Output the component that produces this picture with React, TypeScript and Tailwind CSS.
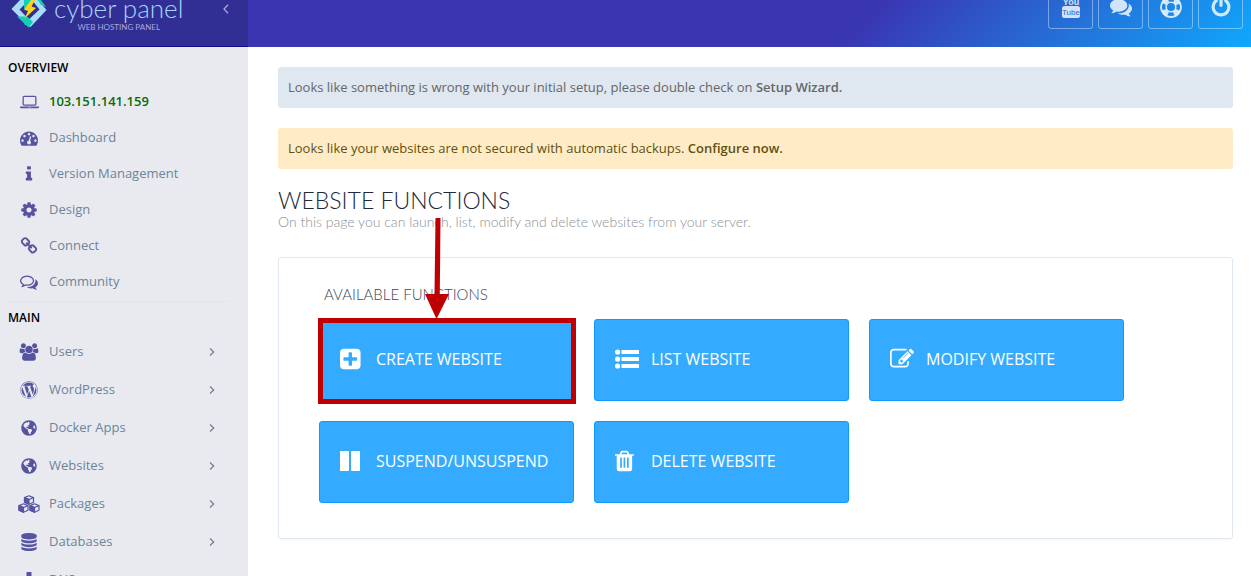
import type { ReactNode } from "react";
import { FaGlobeAmericas, FaWordpress } from "react-icons/fa";

const P = {
  laptop:
    "M416 1280q-66 0-113-47t-47-113v-704q0-66 47-113t113-47h1088q66 0 113 47t47 113v704q0 66-47 113t-113 47h-1088zm-32-864v704q0 13 9.5 22.5t22.5 9.5h1088q13 0 22.5-9.5t9.5-22.5v-704q0-13-9.5-22.5t-22.5-9.5h-1088q-13 0-22.5 9.5t-9.5 22.5zm1376 928h160v96q0 40-47 68t-113 28h-1600q-66 0-113-28t-47-68v-96h1760zm-720 96q16 0 16-16t-16-16h-160q-16 0-16 16t16 16h160z",
  dashboard:
    "M384 1152q0-53-37.5-90.5t-90.5-37.5-90.5 37.5-37.5 90.5 37.5 90.5 90.5 37.5 90.5-37.5 37.5-90.5zm192-448q0-53-37.5-90.5t-90.5-37.5-90.5 37.5-37.5 90.5 37.5 90.5 90.5 37.5 90.5-37.5 37.5-90.5zm428 481l101-382q6-26-7.5-48.5t-38.5-29.5-48 6.5-30 39.5l-101 382q-60 5-107 43.5t-63 98.5q-20 77 20 146t117 89 146-20 89-117q16-60-6-117t-72-91zm660-33q0-53-37.5-90.5t-90.5-37.5-90.5 37.5-37.5 90.5 37.5 90.5 90.5 37.5 90.5-37.5 37.5-90.5zm-640-640q0-53-37.5-90.5t-90.5-37.5-90.5 37.5-37.5 90.5 37.5 90.5 90.5 37.5 90.5-37.5 37.5-90.5zm448 192q0-53-37.5-90.5t-90.5-37.5-90.5 37.5-37.5 90.5 37.5 90.5 90.5 37.5 90.5-37.5 37.5-90.5zm320 448q0 261-141 483-19 29-54 29h-1402q-35 0-54-29-141-221-141-483 0-182 71-348t191-286 286-191 348-71 348 71 286 191 191 286 71 348z",
  info: "M1216 1344v128q0 26-19 45t-45 19h-512q-26 0-45-19t-19-45v-128q0-26 19-45t45-19h64v-384h-64q-26 0-45-19t-19-45v-128q0-26 19-45t45-19h384q26 0 45 19t19 45v576h64q26 0 45 19t19 45zm-128-1152v192q0 26-19 45t-45 19h-256q-26 0-45-19t-19-45v-192q0-26 19-45t45-19h256q26 0 45 19t19 45z",
  cog: "M1152 896q0-106-75-181t-181-75-181 75-75 181 75 181 181 75 181-75 75-181zm512-109v222q0 12-8 23t-20 13l-185 28q-19 54-39 91 35 50 107 138 10 12 10 25t-9 23q-27 37-99 108t-94 71q-12 0-26-9l-138-108q-44 23-91 38-16 136-29 186-7 28-36 28h-222q-14 0-24.5-8.5t-11.5-21.5l-28-184q-49-16-90-37l-141 107q-10 9-25 9-14 0-25-11-126-114-165-168-7-10-7-23 0-12 8-23 15-21 51-66.5t54-70.5q-27-50-41-99l-183-27q-13-2-21-12.5t-8-23.5v-222q0-12 8-23t19-13l186-28q14-46 39-92-40-57-107-138-10-12-10-24 0-10 9-23 26-36 98.5-107.5t94.5-71.5q13 0 26 10l138 107q44-23 91-38 16-136 29-186 7-28 36-28h222q14 0 24.5 8.5t11.5 21.5l28 184q49 16 90 37l142-107q9-9 24-9 13 0 25 10 129 119 165 170 7 8 7 22 0 12-8 23-15 21-51 66.5t-54 70.5q26 50 41 98l183 28q13 2 21 12.5t8 23.5z",
  link: "M1520 1216q0-40-28-68l-208-208q-28-28-68-28-42 0-72 32 3 3 19 18.5t21.5 21.5 15 19 13 25.5 3.5 27.5q0 40-28 68t-68 28q-15 0-27.5-3.5t-25.5-13-19-15-21.5-21.5-18.5-19q-33 31-33 73 0 40 28 68l206 207q27 27 68 27 40 0 68-26l147-146q28-28 28-67zm-703-705q0-40-28-68l-206-207q-28-28-68-28-39 0-68 27l-147 146q-28 28-28 67 0 40 28 68l208 208q27 27 68 27 42 0 72-31-3-3-19-18.5t-21.5-21.5-15-19-13-25.5-3.5-27.5q0-40 28-68t68-28q15 0 27.5 3.5t25.5 13 19 15 21.5 21.5 18.5 19q33-31 33-73zm895 705q0 120-85 203l-147 146q-83 83-203 83-121 0-204-85l-206-207q-83-83-83-203 0-123 88-209l-88-88q-86 88-208 88-120 0-204-84l-208-208q-84-84-84-204t85-203l147-146q83-83 203-83 121 0 204 85l206 207q83 83 83 203 0 123-88 209l88 88q86-88 208-88 120 0 204 84l208 208q84 84 84 204z",
  commentsOutline:
    "M704 384q-153 0-286 52t-211.5 141-78.5 191q0 82 53 158t149 132l97 56-35 84q34-20 62-39l44-31 53 10q78 14 153 14 153 0 286-52t211.5-141 78.5-191-78.5-191-211.5-141-286-52zm0-128q191 0 353.5 68.5t256.5 186.5 94 257-94 257-256.5 186.5-353.5 68.5q-86 0-176-16-124 88-278 128-36 9-86 16h-3q-11 0-20.5-8t-11.5-21q-1-3-1-6.5t.5-6.5 2-6l2.5-5 3.5-5.5 4-5 4.5-5 4-4.5q5-6 23-25t26-29.5 22.5-29 25-38.5 20.5-44q-124-72-195-177t-71-224q0-139 94-257t256.5-186.5 353.5-68.5zm822 1169q10 24 20.5 44t25 38.5 22.5 29 26 29.5 23 25q1 1 4 4.5t4.5 5 4 5 3.5 5.5l2.5 5 2 6 .5 6.5-1 6.5q-3 14-13 22t-22 7q-50-7-86-16-154-40-278-128-90 16-176 16-271 0-472-132 58 4 88 4 161 0 309-45t264-129q125-92 192-212t67-254q0-77-23-152 129 71 204 178t75 230q0 120-71 224.5t-195 176.5z",
  comments:
    "M1408 768q0 139-94 257t-256.5 186.5-353.5 68.5q-86 0-176-16-124 88-278 128-36 9-86 16h-3q-11 0-20.5-8t-11.5-21q-1-3-1-6.5t.5-6.5 2-6l2.5-5 3.5-5.5 4-5 4.5-5 4-4.5q5-6 23-25t26-29.5 22.5-29 25-38.5 20.5-44q-124-72-195-177t-71-224q0-139 94-257t256.5-186.5 353.5-68.5 353.5 68.5 256.5 186.5 94 257zm384 256q0 120-71 224.5t-195 176.5q10 24 20.5 44t25 38.5 22.5 29 26 29.5 23 25q1 1 4 4.5t4.5 5 4 5 3.5 5.5l2.5 5 2 6 .5 6.5-1 6.5q-3 14-13 22t-22 7q-50-7-86-16-154-40-278-128-90 16-176 16-271 0-472-132 58 4 88 4 161 0 309-45t264-129q125-92 192-212t67-254q0-77-23-152 129 71 204 178t75 230z",
  users:
    "M657 896q-162 5-265 128h-134q-82 0-138-40.5t-56-118.5q0-353 124-353 6 0 43.5 21t97.5 42.5 119 21.5q67 0 133-23-5 37-5 66 0 139 81 256zm1071 637q0 120-73 189.5t-194 69.5h-874q-121 0-194-69.5t-73-189.5q0-53 3.5-103.5t14-109 26.5-108.5 43-97.5 62-81 85.5-53.5 111.5-20q10 0 43 21.5t73 48 107 48 135 21.5 135-21.5 107-48 73-48 43-21.5q61 0 111.5 20t85.5 53.5 62 81 43 97.5 26.5 108.5 14 109 3.5 103.5zm-1024-1277q0 106-75 181t-181 75-181-75-75-181 75-181 181-75 181 75 75 181zm704 384q0 159-112.5 271.5t-271.5 112.5-271.5-112.5-112.5-271.5 112.5-271.5 271.5-112.5 271.5 112.5 112.5 271.5zm576 225q0 78-56 118.5t-138 40.5h-134q-103-123-265-128 81-117 81-256 0-29-5-66 66 23 133 23 59 0 119-21.5t97.5-42.5 43.5-21q124 0 124 353zm-128-609q0 106-75 181t-181 75-181-75-75-181 75-181 181-75 181 75 75 181z",
  database:
    "M896 768q237 0 443-43t325-127v170q0 69-103 128t-280 93.5-385 34.5-385-34.5-280-93.5-103-128v-170q119 84 325 127t443 43zm0 768q237 0 443-43t325-127v170q0 69-103 128t-280 93.5-385 34.5-385-34.5-280-93.5-103-128v-170q119 84 325 127t443 43zm0-384q237 0 443-43t325-127v170q0 69-103 128t-280 93.5-385 34.5-385-34.5-280-93.5-103-128v-170q119 84 325 127t443 43zm0-1152q208 0 385 34.5t280 93.5 103 128v128q0 69-103 128t-280 93.5-385 34.5-385-34.5-280-93.5-103-128v-128q0-69 103-128t280-93.5 385-34.5z",
  power:
    "M1664 896q0 156-61 298t-164 245-245 164-298 61-298-61-245-164-164-245-61-298q0-182 80.5-343t226.5-270q43-32 95.5-25t83.5 50q32 42 24.5 94.5t-49.5 84.5q-98 74-151.5 181t-53.5 228q0 104 40.5 198.5t109.5 163.5 163.5 109.5 198.5 40.5 198.5-40.5 163.5-109.5 109.5-163.5 40.5-198.5q0-121-53.5-228t-151.5-181q-42-32-49.5-84.5t24.5-94.5q31-43 84-50t95 25q146 109 226.5 270t80.5 343zm-640-768v640q0 52-38 90t-90 38-90-38-38-90v-640q0-52 38-90t90-38 90 38 38 90z",
  plus: "M1408 960v-128q0-26-19-45t-45-19h-320v-320q0-26-19-45t-45-19h-128q-26 0-45 19t-19 45v320h-320q-26 0-45 19t-19 45v128q0 26 19 45t45 19h320v320q0 26 19 45t45 19h128q26 0 45-19t19-45v-320h320q26 0 45-19t19-45zm256-544v960q0 119-84.5 203.5t-203.5 84.5h-960q-119 0-203.5-84.5t-84.5-203.5v-960q0-119 84.5-203.5t203.5-84.5h960q119 0 203.5 84.5t84.5 203.5z",
  edit: "M888 1184l116-116-152-152-116 116v56h96v96h56zm440-720q-16-16-33 1l-350 350q-17 17-1 33t33-1l350-350q17-17 1-33zm80 594v190q0 119-84.5 203.5t-203.5 84.5h-832q-119 0-203.5-84.5t-84.5-203.5v-832q0-119 84.5-203.5t203.5-84.5h832q63 0 117 25 15 7 18 23 3 17-9 29l-49 49q-14 14-32 8-23-6-45-6h-832q-66 0-113 47t-47 113v832q0 66 47 113t113 47h832q66 0 113-47t47-113v-126q0-13 9-22l64-64q15-15 35-7t20 29zm-96-738l288 288-672 672h-288v-288zm444 132l-92 92-288-288 92-92q28-28 68-28t68 28l152 152q28 28 28 68t-28 68z",
  trash:
    "M704 1376v-704q0-14-9-23t-23-9h-64q-14 0-23 9t-9 23v704q0 14 9 23t23 9h64q14 0 23-9t9-23zm256 0v-704q0-14-9-23t-23-9h-64q-14 0-23 9t-9 23v704q0 14 9 23t23 9h64q14 0 23-9t9-23zm256 0v-704q0-14-9-23t-23-9h-64q-14 0-23 9t-9 23v704q0 14 9 23t23 9h64q14 0 23-9t9-23zm-544-992h448l-48-117q-7-9-17-11h-317q-10 2-17 11zm928 32v64q0 14-9 23t-23 9h-96v948q0 83-47 143.5t-113 60.5h-832q-66 0-113-58.5t-47-141.5v-952h-96q-14 0-23-9t-9-23v-64q0-14 9-23t23-9h309l70-167q15-37 54-63t79-26h320q40 0 79 26t54 63l70 167h309q14 0 23 9t9 23z",
};

function Glyph({ d, box = "0 0 1792 1792", className = "h-[18px] w-[18px]" }: { d: string; box?: string; className?: string }) {
  return (
    <svg viewBox={box} fill="currentColor" aria-hidden="true" className={className}>
      <path d={d} />
    </svg>
  );
}

function Cubes() {
  return (
    <svg viewBox="0 0 22 18" aria-hidden="true" className="h-[18px] w-[22px] shrink-0" fill="none" stroke="currentColor" strokeWidth="1.2" strokeLinejoin="round">
      {["translate(5.5 0)", "translate(0 8)", "translate(11 8)"].map((t) => (
        <g key={t} transform={t}>
          <path d="M5.5 .8L10 2.6V7.200L5.500 9.300L1 7.200V2.600Z" />
          <path d="M1 2.600L5.500 4.500L10 2.600" />
          <path d="M1 2.600L5.500 4.500V9.300L1 7.200Z" fill="currentColor" />
        </g>
      ))}
    </svg>
  );
}

function Sitemap() {
  return (
    <svg viewBox="0 0 18 18" aria-hidden="true" className="h-[18px] w-[18px]" fill="currentColor">
      <path d="M6.500 1h5v5h-2v2.500h6V12H18v5h-5v-5h1.300V9.700H9.600V12h1.900v5h-5v-5h1.900V9.700H3.700V12H5v5H0v-5h2.500V8.500h6V6h-2z" />
    </svg>
  );
}

type NavItem = { label: string; icon: ReactNode };

const overview: NavItem[] = [
  { label: "Dashboard", icon: <Glyph d={P.dashboard} /> },
  { label: "Version Management", icon: <Glyph d={P.info} /> },
  { label: "Design", icon: <Glyph d={P.cog} /> },
  { label: "Connect", icon: <Glyph d={P.link} /> },
  { label: "Community", icon: <Glyph d={P.commentsOutline} /> },
];

const mainItems: NavItem[] = [
  { label: "Users", icon: <Glyph d={P.users} box="0 0 2048 1792" className="h-[18px] w-5" /> },
  { label: "WordPress", icon: <FaWordpress size={18} /> },
  { label: "Docker Apps", icon: <FaGlobeAmericas size={16} /> },
  { label: "Websites", icon: <FaGlobeAmericas size={16} /> },
  { label: "Packages", icon: <Cubes /> },
  { label: "Databases", icon: <Glyph d={P.database} /> },
  { label: "DNS", icon: <Sitemap /> },
];

function IconBox({ children }: { children: ReactNode }) {
  return <span className="flex w-[22px] shrink-0 items-center justify-center text-[#5654a0]">{children}</span>;
}

function Logo() {
  return (
    <a href="#home" aria-label="Cyber Panel web hosting panel" className="flex h-full items-start gap-[6px] pl-[10px]">
      <svg viewBox="0 0 38 28" className="h-7 w-[38px]" aria-hidden="true">
        <path d="M1.500 9L10 0H19L9.500 9.500L17 17.500L13 20.500Z" fill="#a9dcf8" />
        <path d="M14 0H24L19 5L14 9Z" fill="#0fd0b5" />
        <path d="M20.500 27L36.500 10L31 3.500L28 0H22L29.500 9.500L14 24Z" fill="#a9dcf8" />
        <path d="M7 16.500H17L23 22L18.500 27.500Z" fill="#0fd0b5" />
        <path d="M28 0H31L36 7L31 5Z" fill="#0fd0b5" />
        <path d="M21 0L14 9.500L18 11L14.500 18.500L26 8L21.500 6.500L25 0Z" fill="#ffd318" />
      </svg>
      <span className="flex flex-col items-center">
        <span className="-mt-[6px] font-['Lato',sans-serif] text-[26px] leading-7 font-light whitespace-nowrap text-[#a9d5fb]">cyber panel</span>
        <span className="font-['Lato',sans-serif] text-[8px] leading-[10px] whitespace-nowrap text-[#a9a9de]">WEB HOSTING PANEL</span>
      </span>
    </a>
  );
}

function HeaderButton({ label, children }: { label: string; children: ReactNode }) {
  return (
    <button
      type="button"
      aria-label={label}
      className="flex h-11 w-[45px] items-center justify-center rounded-[3px] border border-white/40 text-white/80"
    >
      {children}
    </button>
  );
}

function YouTube() {
  return (
    <svg viewBox="0 0 20 26" className="h-[26px] w-5" aria-hidden="true">
      <text x="10" y="11" textAnchor="middle" fill="currentColor" className="font-['Liberation_Sans',sans-serif] text-[9px] font-bold">
        You
      </text>
      <rect x="1" y="12" width="18" height="12" rx="2.500" fill="currentColor" />
      <text x="10" y="21" textAnchor="middle" fill="#2767cd" className="font-['Liberation_Sans',sans-serif] text-[8px]">
        Tube
      </text>
    </svg>
  );
}

function LifeRing() {
  return (
    <svg viewBox="0 0 22 22" className="h-[22px] w-[22px]" fill="none" stroke="currentColor" aria-hidden="true">
      <circle cx="11" cy="11" r="10" strokeWidth="1.800" />
      <circle cx="11" cy="11" r="4.800" strokeWidth="1.600" />
      <circle cx="11" cy="11" r="7.500" strokeWidth="4.500" strokeDasharray="5.890 5.890" strokeDashoffset="-2.945" />
    </svg>
  );
}

function Chevron({ left = false, className = "" }: { left?: boolean; className?: string }) {
  return (
    <svg viewBox="0 0 6 10" fill="none" stroke="currentColor" strokeWidth="1.3" aria-hidden="true" className={className}>
      <path d={left ? "M5 .8L1 5L5 9.200" : "M1 1.500L4.700 5L1 8.500"} />
    </svg>
  );
}

const actions: (NavItem & { marked?: boolean })[] = [
  { label: "CREATE WEBSITE", icon: <Glyph d={P.plus} box="128 0 1792 1792" className="h-6 w-6" />, marked: true },
  {
    label: "LIST WEBSITE",
    icon: (
      <svg viewBox="0 0 24 24" className="h-6 w-6" fill="currentColor" aria-hidden="true">
        {[5, 12, 19].map((y) => (
          <g key={y}>
            <circle cx="2.600" cy={y} r="2.600" />
            <rect x="6.500" y={y - 2} width="17.500" height="4" rx=".6" />
          </g>
        ))}
      </svg>
    ),
  },
  { label: "MODIFY WEBSITE", icon: <Glyph d={P.edit} className="h-6 w-6" /> },
  {
    label: "SUSPEND/UNSUSPEND",
    icon: (
      <svg viewBox="0 0 24 24" className="h-6 w-6" fill="currentColor" aria-hidden="true">
        <rect x="0" y="2" width="9" height="20" rx=".7" />
        <rect x="11" y="2" width="9" height="20" rx=".7" />
      </svg>
    ),
  },
  { label: "DELETE WEBSITE", icon: <Glyph d={P.trash} box="192 0 1792 1792" className="h-6 w-6" /> },
];

export default function App() {
  return (
    <div className="flex h-screen flex-col overflow-hidden bg-white font-['Open_Sans',sans-serif] text-[13px] text-[#3e4855]">
      <header className="flex h-[47px] shrink-0 bg-[linear-gradient(135deg,#3a35b1_0%,#3a35b1_68%,#0fa8fd_100%)]">
        <div className="flex w-[248px] shrink-0 justify-between border-b border-[#120c90] bg-[#312e94]">
          <Logo />
          <button type="button" aria-label="Collapse sidebar" className="flex h-[18px] w-11 items-center justify-center text-[#a9a8dc]">
            <Chevron left className="h-[10px] w-[6px]" />
          </button>
        </div>
        <nav aria-label="Quick links" className="flex flex-1 items-end justify-end gap-[5px] pr-2 pb-[18px]">
          <HeaderButton label="YouTube"><YouTube /></HeaderButton>
          <HeaderButton label="Forums"><Glyph d={P.comments} className="h-[22px] w-[22px]" /></HeaderButton>
          <HeaderButton label="Help"><LifeRing /></HeaderButton>
          <HeaderButton label="Log out"><Glyph d={P.power} className="h-[22px] w-[22px]" /></HeaderButton>
        </nav>
      </header>

      <div className="flex min-h-0 flex-1">
        <aside className="w-[248px] shrink-0 overflow-hidden bg-[#e9eaf0] px-2 pt-[11px] text-[#6c8499]">
          <h2 className="text-xs leading-5 font-semibold text-black">OVERVIEW</h2>
          <ul className="pt-[6px]">
            <li className="flex h-9 items-center gap-[9px] pl-[10px] font-semibold text-[#0b6b0b]">
              <IconBox><Glyph d={P.laptop} box="0 0 1920 1792" className="h-[18px] w-[19px]" /></IconBox>
              103.151.141.159
            </li>
            {overview.map((item) => (
              <li key={item.label}>
                <a href="#overview" className="flex h-9 items-center gap-[9px] pl-[10px]">
                  <IconBox>{item.icon}</IconBox>
                  {item.label}
                </a>
              </li>
            ))}
          </ul>
          <hr className="mt-px mr-3 border-[#dbe6f2]" />
          <h2 className="pt-[6px] text-xs leading-5 font-semibold text-black">MAIN</h2>
          <ul className="pt-[5px]">
            {mainItems.map((item) => (
              <li key={item.label}>
                <a href="#main" className="flex h-[38px] items-center gap-[9px] pr-[25px] pl-[10px]">
                  <IconBox>{item.icon}</IconBox>
                  {item.label}
                  <Chevron className="ml-auto h-[10px] w-[6px]" />
                </a>
              </li>
            ))}
          </ul>
        </aside>

        <main className="min-w-0 flex-1 pt-5 pr-[18px] pl-[30px]">
          <p className="rounded-[3px] bg-[#dfe7f1] px-[10px] py-[10px] leading-[21px] text-[#666]">
            Looks like something is wrong with your initial setup, please double check on{" "}
            <a href="#wizard" className="font-semibold">Setup Wizard.</a>
          </p>
          <p className="mt-5 rounded-[3px] bg-[#ffecc6] px-[10px] py-[10px] leading-[21px] text-[#62500f]">
            Looks like your websites are not secured with automatic backups.{" "}
            <a href="#backups" className="font-semibold">Configure now.</a>
          </p>
          <h1 className="mt-[18px] font-['Lato',sans-serif] text-[23px] leading-[27px] font-light text-[#20283a]">WEBSITE FUNCTIONS</h1>
          <p className="font-['Lato',sans-serif] text-[14px] leading-4 font-light text-[#8b9096]">
            On this page you can launch, list, modify and delete websites from your server.
          </p>

          <section className="mt-[27px] rounded-[3px] border border-[#dfe8f1] pt-[26px] pr-10 pb-[35px] pl-10 shadow-[0_1px_2px_rgba(0,0,0,0.04)]">
            <h2 className="pl-[5px] font-['Lato',sans-serif] text-[15px] leading-5 font-light text-[#3e4855]">AVAILABLE FUNCTIONS</h2>
            <div className="mt-[15px] flex flex-wrap gap-5">
              {actions.map((action) => (
                <div key={action.label} className="relative">
                  <a
                    href="#function"
                    className="flex h-[82px] w-[255px] items-center gap-3 rounded-[3px] border border-[#0d99ff] bg-[#35abff] pb-[2px] pl-5 text-base text-white"
                  >
                    <span className="shrink-0">{action.icon}</span>
                    {action.label}
                  </a>
                  {action.marked && (
                    <>
                      <span className="pointer-events-none absolute -top-px -right-[2px] -bottom-[3px] -left-px border-[5px] border-[#c00000]" />
                      <svg viewBox="0 0 26 101" className="pointer-events-none absolute bottom-[82px] left-[105px] h-[101px] w-[26px]" aria-hidden="true">
                        <path d="M11.500 0H16.500L15.800 76H25L12.500 101L1 76H10.500Z" fill="#c00000" />
                      </svg>
                    </>
                  )}
                </div>
              ))}
            </div>
          </section>
        </main>
      </div>
    </div>
  );
}
